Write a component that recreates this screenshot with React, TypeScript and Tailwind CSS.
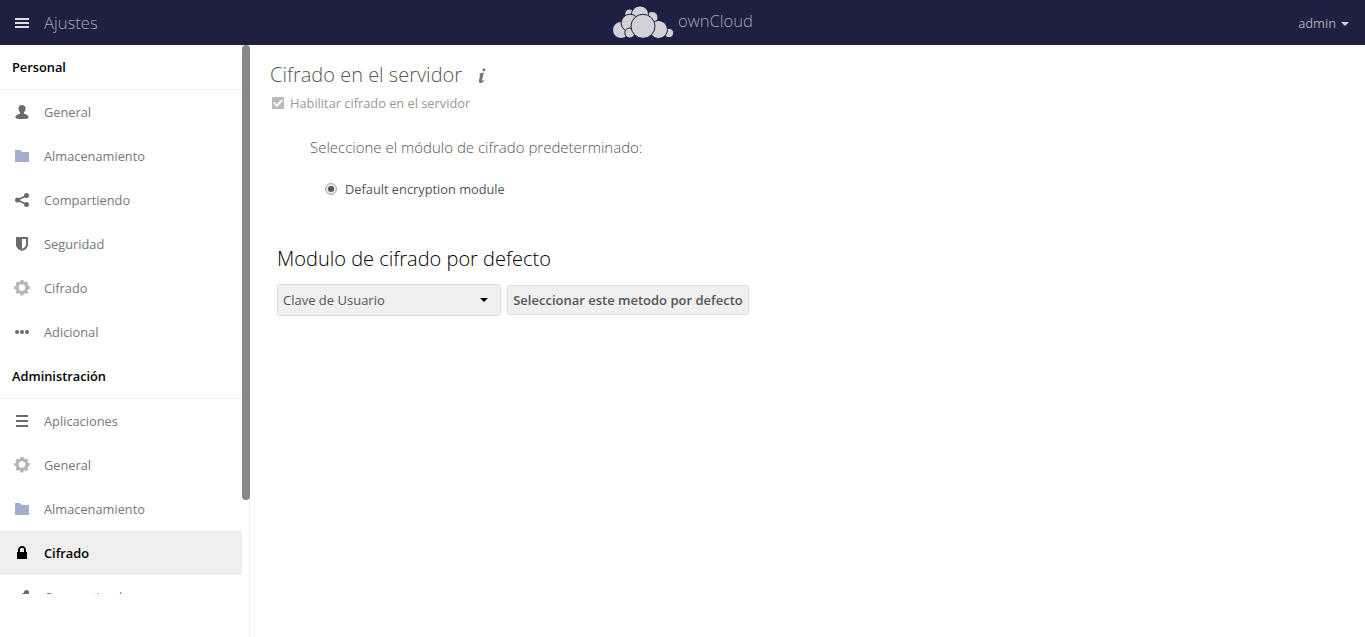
import React from "react";

type IconName = "user" | "folder" | "share" | "shield" | "gear" | "more" | "list" | "lock";

function Icon({ name }: { name: IconName }) {
  return (
    <svg viewBox="0 0 16 16" className="h-4 w-4 shrink-0" fill="#6b6b6b">
      {name === "user" && (
        <path d="M8 1C5.900 1 4.400 2.400 4.400 4.300c0 2 .8 3.200 1.600 4v1.200C5.300 10.200 1.300 10.800 1.300 13.200c0 1.300 2.500 1.800 6.700 1.800s6.700-.5 6.700-1.800c0-2.400-4-3-4.700-3.700V8.300c.8-.8 1.600-2 1.600-4C11.600 2.400 10.100 1 8 1z" />
      )}
      {name === "folder" && <path fill="#a2aeca" d="M1 2h5l2 2h7v10H1z" />}
      {name === "share" && (
        <>
          <path d="M3.500 8 12.500 3.500M3.500 8l9 4.500" stroke="#6b6b6b" strokeWidth="1.800" />
          <circle cx="3.500" cy="8" r="2.500" />
          <circle cx="12.500" cy="3.500" r="2.500" />
          <circle cx="12.500" cy="12.500" r="2.500" />
        </>
      )}
      {name === "shield" && (
        <path fillRule="evenodd" d="M2 1h12v7.500c0 3.500-3 5.500-6 6.500-3-1-6-3-6-6.500zM8 3v10c2.500-1 4-2.500 4-4.700V3z" />
      )}
      {name === "gear" && (
        <g stroke="#b5b5b5" fill="none">
          <path
            d="M8 0v3M8 12.400v3M.3 7.700h3M12.700 7.700h3M2.600 2.300l2 2M11.400 11.100l2 2M13.400 2.300l-2 2M4.600 11.100l-2 2"
            strokeWidth="3.200"
          />
          <circle cx="8" cy="7.500" r="4.800" strokeWidth="3" />
        </g>
      )}
      {name === "more" && (
        <>
          <circle cx="3" cy="8" r="2" />
          <circle cx="8" cy="8" r="2" />
          <circle cx="13" cy="8" r="2" />
        </>
      )}
      {name === "list" && <path d="M2 2h12v2H2zM2 7h12v2H2zM2 12h12v2H2z" />}
      {name === "lock" && (
        <path
          fill="#000"
          fillRule="evenodd"
          d="M8 1C5.500 1 4 2.700 4 5v2H3v7h10V7h-1V5c0-2.300-1.500-4-4-4zm0 1.800c1.300 0 2 .9 2 2.200v2H6V5c0-1.300.7-2.200 2-2.200z"
        />
      )}
    </svg>
  );
}

function NavItem({ icon, label, active = false }: { icon: IconName; label: string; active?: boolean }) {
  return (
    <li className={active ? "bg-[#efefef] font-semibold text-black" : "text-[#777]"}>
      <a className="flex h-11 items-center gap-3.5 pl-3.5" href="#">
        <Icon name={icon} />
        <span className="pt-px">{label}</span>
      </a>
    </li>
  );
}

function NavHeading({ children }: { children: React.ReactNode }) {
  return <h2 className="h-[45px] border-b border-[#eee] pl-3 font-semibold leading-[45px] text-black">{children}</h2>;
}

function Logo() {
  return (
    <svg viewBox="0 0 62 36" className="-mt-0.5 h-9 w-[62px]" fill="#d2d1d8" stroke="#1d2042" strokeWidth="1">
      <circle cx="9" cy="26" r="8.500" />
      <circle cx="17.500" cy="9.700" r="4.700" />
      <circle cx="40" cy="13.500" r="6" />
      <circle cx="28" cy="10.500" r="8.600" />
      <circle cx="18" cy="19" r="8.800" />
      <circle cx="17.800" cy="29" r="5" />
      <circle cx="57" cy="29" r="4.700" />
      <circle cx="46.500" cy="25.500" r="9" />
      <circle cx="31" cy="22.300" r="12" />
    </svg>
  );
}

export default function App() {
  return (
    <div className="flex h-[637px] w-[1365px] flex-col overflow-hidden bg-white font-['Open_Sans',sans-serif] text-[12.8px]">
      <header className="grid h-[45px] shrink-0 grid-cols-[612px_1fr_auto] items-center bg-[#1d2040] text-[#a7a8b5]">
        <div className="flex items-center gap-3.5 pl-3.5">
          <svg viewBox="0 0 16 16" className="h-4 w-4" fill="#dddde2">
            <path d="M1 3h14v2H1zM1 7h14v2H1zM1 11h14v2H1z" />
          </svg>
          <span className="text-[16.600px] font-light leading-6">Ajustes</span>
        </div>
        <div className="flex items-center gap-1">
          <Logo />
          <span className="pb-1 text-[16.600px] font-light leading-6">ownCloud</span>
        </div>
        <div className="flex items-center gap-[5px] pr-4 pt-0.5">
          <span>admin</span>
          <svg viewBox="0 0 8 4" className="h-1 w-2" fill="#d2d2d9">
            <path d="M0 0h8L4 4z" />
          </svg>
        </div>
      </header>

      <div className="flex min-h-0 flex-1">
        <aside className="flex w-[250px] shrink-0 border-r border-[#eee]">
          <nav className="h-[549px] w-[242px] shrink-0 overflow-hidden">
            <NavHeading>Personal</NavHeading>
            <ul>
              <NavItem icon="user" label="General" />
              <NavItem icon="folder" label="Almacenamiento" />
              <NavItem icon="share" label="Compartiendo" />
              <NavItem icon="shield" label="Seguridad" />
              <NavItem icon="gear" label="Cifrado" />
              <NavItem icon="more" label="Adicional" />
            </ul>
            <NavHeading>Administración</NavHeading>
            <ul>
              <NavItem icon="list" label="Aplicaciones" />
              <NavItem icon="gear" label="General" />
              <NavItem icon="folder" label="Almacenamiento" />
              <NavItem icon="lock" label="Cifrado" active />
              <NavItem icon="share" label="Compartiendo" />
            </ul>
          </nav>
          <div className="z-10 -mr-px h-[455px] w-2 shrink-0 rounded bg-[#888]" />
        </aside>

        <main className="flex-1 pl-5 pt-[17px]">
          <h2 className="flex items-center text-xl font-light leading-[26px] text-[#555]">
            Cifrado en el servidor
            <svg viewBox="0 0 16 16" className="ml-3 mt-0.5 h-4 w-4" fill="#777">
              <circle cx="9.900" cy="1.700" r="1.500" />
              <path d="M5.200 6.100c1.300-.9 2.600-1.300 4.600-1.300L8.100 11.900c-.2.900.2 1 .8.600l1-.7.300.6C9 14 7.800 15 6.400 15c-1.400 0-1.800-1.100-1.500-2.400l1.200-5.300c.1-.7-.2-.8-.8-.6z" />
            </svg>
          </h2>
          <div className="flex h-[30px] items-center gap-[6px] pl-0.5 text-[#999]">
            <svg viewBox="0 0 12 12" className="h-3 w-3">
              <path fill="#bbb" d="M0 0h12v12H0z" />
              <path d="m1.800 5.600 3 3L10.400 3" fill="none" stroke="#fff" strokeWidth="1.900" />
            </svg>
            <label className="pt-px">Habilitar cifrado en el servidor</label>
          </div>
          <p className="pl-10 pt-[17px] text-[15px] font-light leading-6 text-[#555]">
            Seleccione el módulo de cifrado predeterminado:
          </p>
          <div className="flex items-center gap-2 pl-[55px] pt-5 leading-[18px] text-[#555]">
            <svg viewBox="0 0 12 12" className="h-3 w-3">
              <circle cx="6" cy="6" r="5.500" fill="#e4e4e4" stroke="#aaa" />
              <circle cx="6" cy="6" r="3" fill="#555" />
            </svg>
            <span className="pt-px">Default encryption module</span>
          </div>
          <h2 className="pl-[7px] pt-12 text-xl font-light leading-[26px] text-black">
            Modulo de cifrado por defecto
          </h2>
          <div className="flex items-center gap-1.5 pl-[7px] pt-3 text-[13px] text-[#555]">
            <div className="flex h-8 w-[224px] items-center justify-between rounded-[3px] border border-[#ddd] bg-[#f0f0f0] pl-[5px] pr-3">
              <span className="pt-px">Clave de Usuario</span>
              <svg viewBox="0 0 8 4" className="h-1 w-2">
                <path d="M0 0h8L4 4z" />
              </svg>
            </div>
            <button className="h-[30px] w-[242px] whitespace-nowrap rounded-[3px] border border-[#ddd] bg-[#f0f0f0] pt-px font-semibold">
              Seleccionar este metodo por defecto
            </button>
          </div>
        </main>
      </div>
    </div>
  );
}
